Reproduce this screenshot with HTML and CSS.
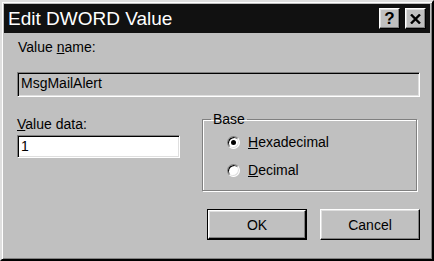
FILE: index.html
```html
<!DOCTYPE html>
<html lang="en">
<head>
    <meta charset="UTF-8">
    <title>Edit DWORD Value</title>
    <link rel="stylesheet" href="styles.css">
</head>
<body>
    <div class="window">
        <div class="titlebar">
            <span class="title">Edit DWORD Value</span>
            <div class="title-buttons">
                <div class="tbtn">?</div>
                <div class="tbtn tbtn-close">
                    <svg width="11" height="10" viewBox="0 0 11 10">
                        <path d="M1 0.5 L10 9.5 M10 0.5 L1 9.5" stroke="#000" stroke-width="2.4" fill="none"/>
                    </svg>
                </div>
            </div>
        </div>

        <div class="content">
            <div class="label label-name">Value <u>n</u>ame:</div>
            <div class="field field-readonly">MsgMailAlert</div>

            <div class="row">
                <div class="left-col">
                    <div class="label"><u>V</u>alue data:</div>
                    <div class="field field-data">1</div>
                </div>
                <fieldset class="group">
                    <legend>Base</legend>
                    <div class="radio-row">
                        <span class="radio checked"></span>
                        <span><u>H</u>exadecimal</span>
                    </div>
                    <div class="radio-row">
                        <span class="radio"></span>
                        <span><u>D</u>ecimal</span>
                    </div>
                </fieldset>
            </div>

            <div class="buttons">
                <div class="btn btn-default"><div class="btn-face">OK</div></div>
                <div class="btn"><div class="btn-face">Cancel</div></div>
            </div>
        </div>
    </div>
</body>
</html>
```

FILE: styles.css
```css
body{
    margin:0;
    padding:0;
    background-color: #c0c0c0;
    font-family: "Liberation Sans", Arial, sans-serif;
    font-size: 14px;
    color: #000;
}

.window{
    box-sizing: border-box;
    width: 434px;
    height: 261px;
    padding: 2px;
    background-color: #c0c0c0;
    border: 2px solid;
    border-color: #dfdfdf #000 #000 #dfdfdf;
    box-shadow: inset 1px 1px #fff, inset -1px -1px #808080;
}

.titlebar{
    height: 29px;
    background-color: #111;
    display: flex;
    align-items: center;
    justify-content: space-between;
    padding: 0 4px 0 4px;
}

.title{
    color: #fff;
    font-size: 19px;
    line-height: 29px;
}

.title-buttons{
    display: flex;
    gap: 5px;
}

.tbtn{
    box-sizing: border-box;
    width: 21px;
    height: 21px;
    background-color: #c0c0c0;
    border: 1px solid;
    border-color: #fff #000 #000 #fff;
    box-shadow: inset -1px -1px #808080, inset 1px 1px #dfdfdf;
    display: flex;
    align-items: center;
    justify-content: center;
    font-weight: bold;
    font-size: 17px;
    line-height: 18px;
}

.content{
    padding: 6px 10px 0 13px;
}

.label{
    line-height: 16px;
}

.label-name{
    margin-left: 1px;
}

.field{
    box-sizing: border-box;
    height: 25px;
    margin-top: 17px;
    padding: 0 3px;
    line-height: 21px;
    border: 1px solid;
    border-color: #808080 #fff #fff #808080;
    box-shadow: inset 1px 1px #000, inset -1px -1px #dfdfdf;
}

.field-readonly{
    background-color: #c0c0c0;
}

.field-data{
    width: 163px;
    height: 23px;
    margin-top: 3px;
    background-color: #fff;
    line-height: 20px;
}

.row{
    display: flex;
    align-items: flex-start;
    margin-top: 19px;
}

.left-col{
    width: 163px;
}

.group{
    box-sizing: border-box;
    width: 215px;
    height: 80px;
    margin: -5px 0 0 22px;
    padding: 1px 0 0 24px;
    border: 1px solid #808080;
    box-shadow: inset 1px 1px #fff, 1px 1px #fff;
}

.group legend{
    padding: 0 2px;
    margin-left: -16px;
    line-height: 16px;
}

.radio-row{
    display: flex;
    align-items: center;
    gap: 8px;
    height: 28px;
}

.radio{
    box-sizing: border-box;
    width: 13px;
    height: 13px;
    border-radius: 50%;
    background-color: #fff;
    border: 1px solid;
    border-color: #808080 #fff #fff #808080;
    box-shadow: inset 1px 1px #000, inset -1px -1px #dfdfdf;
    display: flex;
    align-items: center;
    justify-content: center;
}

.radio.checked::after{
    content: "";
    width: 5px;
    height: 5px;
    border-radius: 50%;
    background-color: #000;
}

.buttons{
    display: flex;
    justify-content: flex-end;
    gap: 13px;
    margin-top: 18px;
}

.btn{
    box-sizing: border-box;
    width: 100px;
    height: 31px;
    display: flex;
}

.btn-face{
    flex: 1;
    display: flex;
    align-items: center;
    justify-content: center;
    border: 1px solid;
    border-color: #fff #000 #000 #fff;
    box-shadow: inset -1px -1px #808080, inset 1px 1px #dfdfdf;
}

.btn-default{
    border: 1px solid #000;
}
```
